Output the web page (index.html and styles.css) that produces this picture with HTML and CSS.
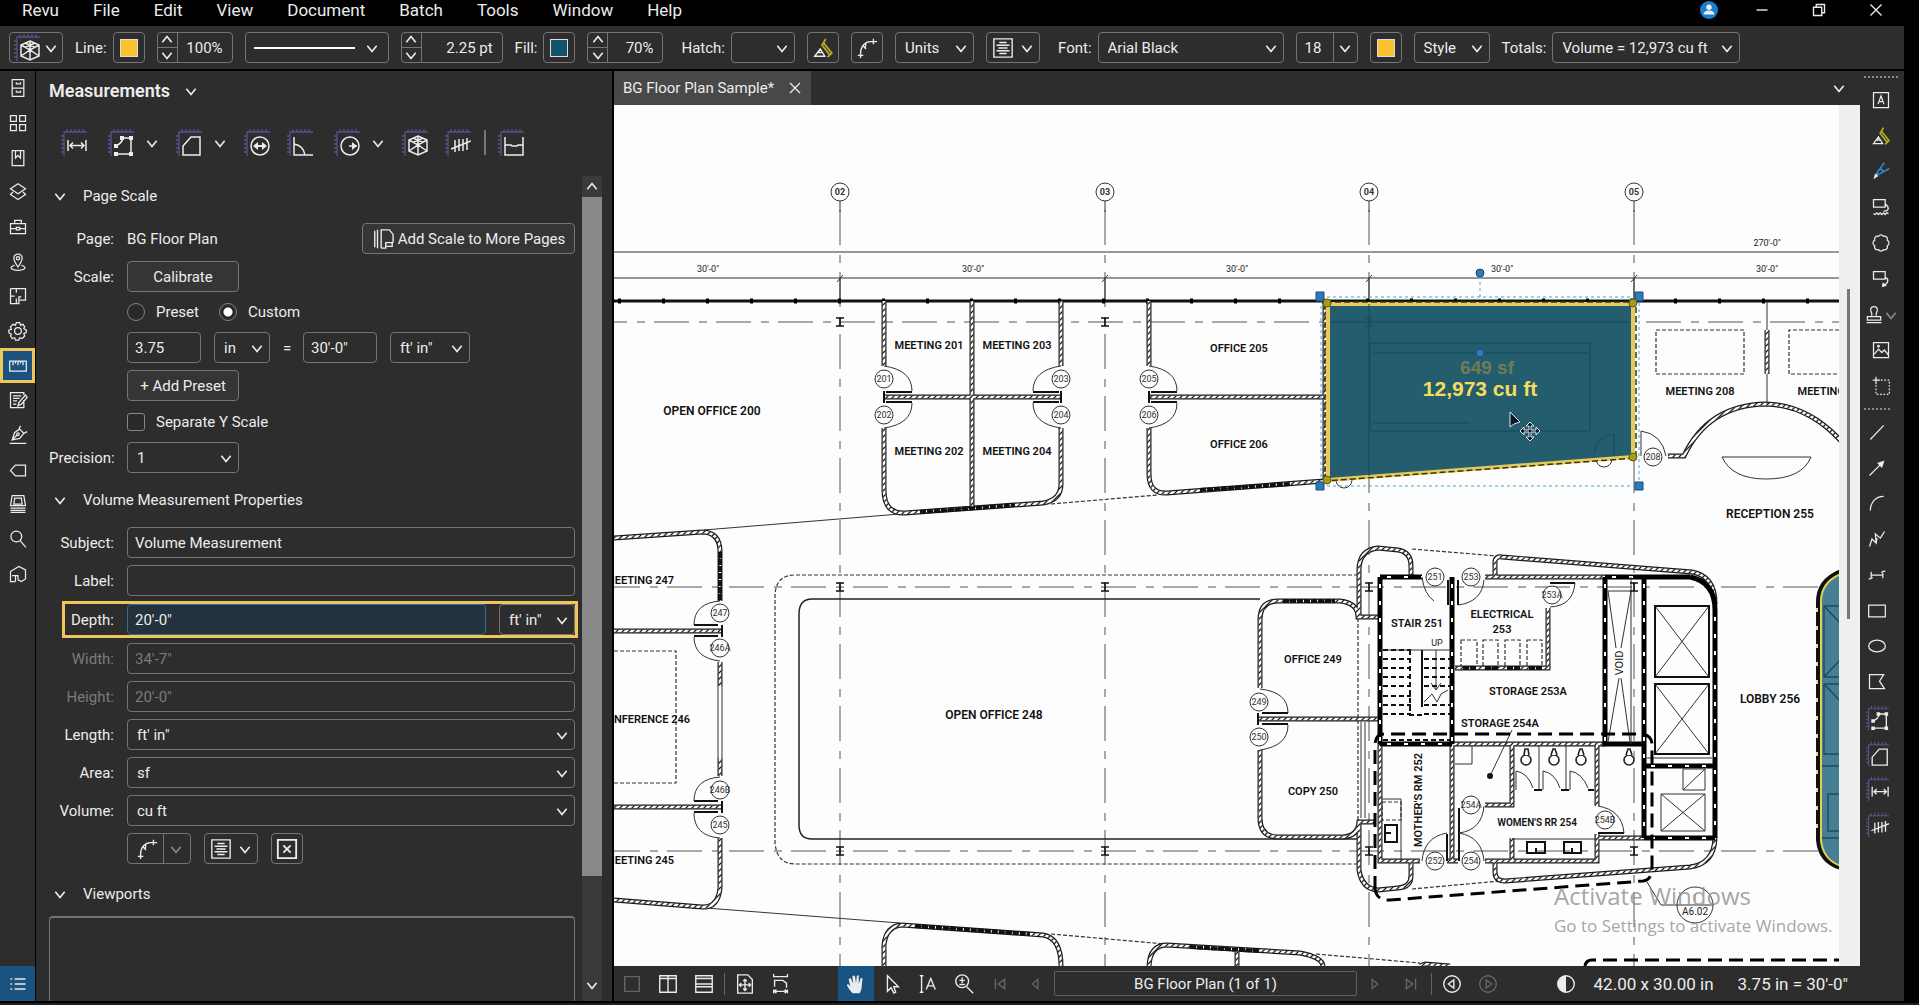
FILE: index.html
```html
<!DOCTYPE html>
<html lang="en">
<head>
<meta charset="utf-8">
<title>BG Floor Plan Sample - Revu</title>
<link rel="stylesheet" href="styles.css">
</head>
<body>
<svg class="sprite" aria-hidden="true">
  <symbol id="ruler" viewBox="0 0 26 27"><path class="ruler" d="M3 27V3H26M6 3V0M10 3V0M14 3V0M18 3V0M22 3V0M3 7H0M3 11H0M3 15H0M3 19H0M3 23H0"/></symbol>
  <symbol id="m-length" viewBox="0 0 26 27"><use href="#ruler"/><path d="M7 11v11M25 11v11M9 16.500h14M12 13.500l-3 3 3 3M20 13.500l3 3-3 3"/></symbol>
  <symbol id="m-poly" viewBox="0 0 26 27"><use href="#ruler"/><path d="M8 17c2-1 6-3 7-8h8v16H8"/><path class="solid" d="M6 15h4v4H6zM12 7h4v4h-4zM21 7h4v4h-4zM21 23h4v4h-4zM6 23h4v4H6z"/></symbol>
  <symbol id="m-area" viewBox="0 0 26 27"><use href="#ruler"/><path d="M7 17l8-9h9v18H7z"/></symbol>
  <symbol id="m-diam" viewBox="0 0 26 27"><use href="#ruler"/><circle cx="16" cy="17" r="9"/><path class="solid" d="M9 17l5-4v3h4v-3l5 4-5 4v-3h-4v3z"/></symbol>
  <symbol id="m-angle" viewBox="0 0 26 27"><use href="#ruler"/><path d="M7 8v18h19M7 15c6 1 10 5 11 11"/></symbol>
  <symbol id="m-radius" viewBox="0 0 26 27"><use href="#ruler"/><circle cx="16" cy="17" r="9"/><path d="M15 17h8"/><path class="solid" d="M18 13l5 4-5 4z"/></symbol>
  <symbol id="m-volume" viewBox="0 0 26 27"><use href="#ruler"/><path d="M16 7l9 4v11l-9 4-9-4V11zM7 11l9 5 9-5M16 7v19M7 22l9-6 9 6M11 9l10 4.500M21 9l-10 4.500"/></symbol>
  <symbol id="m-count" viewBox="0 0 26 27"><use href="#ruler"/><path d="M10 11v12M14 10v12M18 10v12M22 9v12M6 20l20-8"/></symbol>
  <symbol id="m-cut" viewBox="0 0 26 27"><use href="#ruler"/><path d="M7 8v18h18V8M7 16h6l1 1h5l1-1h5"/></symbol>

  <symbol id="i-file" viewBox="0 0 24 24"><path d="M5 2h14v20H5zM5 12h14M10 5v2h5V5M10 15v2h5v-2"/></symbol>
  <symbol id="i-grid" viewBox="0 0 24 24"><path d="M3 3h7v7H3zM14 3h7v7h-7zM3 14h7v7H3zM14 14h7v7h-7z"/></symbol>
  <symbol id="i-book" viewBox="0 0 24 24"><path d="M5 3h14v18H5zM9 3v9l3-3 3 3V3"/></symbol>
  <symbol id="i-layers" viewBox="0 0 24 24"><path d="M12 2l9 6-9 6-9-6zM6 12l-3 3 9 6 9-6-3-3"/></symbol>
  <symbol id="i-case" viewBox="0 0 24 24"><path d="M3 8h18v12H3zM8 8V4h8v4M3 14h7M14 14h7M10 12.500h4v3h-4z"/></symbol>
  <symbol id="i-pin" viewBox="0 0 24 24"><path d="M12 18C8 12 7 10 7 7.500a5 5 0 0 1 10 0C17 10 16 12 12 18z"/><circle cx="12" cy="7.500" r="2"/><path d="M8 16c-8 2-4 6 4 6s12-4 4-6"/></symbol>
  <symbol id="i-plan" viewBox="0 0 24 24"><path d="M3 3h7v5M3 3v18h7v-6M14 3h7v14h-8v-4h3M10 3h4M3 12h5M10 21h3v-4"/></symbol>
  <symbol id="i-gear" viewBox="0 0 24 24"><circle cx="12" cy="12" r="4"/><path d="M10 2h4l1 3 3-1 2 3-1 2 3 2v3l-3 1 1 3-3 3-3-1-1 3h-4l-1-3-3 1-2-3 1-2-3-2v-3l3-1-1-3 3-3 3 1z"/></symbol>
  <symbol id="i-meas" viewBox="0 0 24 24"><path d="M2 6h20v12H2zM6 6v5M9 6v3M12 6v5M15 6v3M18 6v5"/></symbol>
  <symbol id="i-form" viewBox="0 0 24 24"><path d="M19 12v9H3V3h16v3M6 7h10M6 10h8M6 13h5M6 17h4M21 6l-8 9-1 4 4-2 7-8z"/></symbol>
  <symbol id="i-sign" viewBox="0 0 24 24"><path d="M2 22h20M5 18l3-9 6-4 5 5-5 6zM5 18l6-6M13 5l2-4M19 10l4-2M14 5l5 5"/><circle cx="12" cy="11" r="1.500"/></symbol>
  <symbol id="i-tag" viewBox="0 0 24 24"><path d="M9 6h12v13H9l-6-6.500z"/></symbol>
  <symbol id="i-stack" viewBox="0 0 24 24"><path d="M5 2h14l2 12H3zM8 5h8l1 7H7zM3 17h18M3 19.500h18M3 22h18"/></symbol>
  <symbol id="i-search" viewBox="0 0 24 24"><circle cx="10" cy="9" r="6.500"/><path d="M14.500 14l7 8"/></symbol>
  <symbol id="i-studio" viewBox="0 0 24 24"><path d="M9 21H3V9l10-6 8 4v11l-5 3-4-2M9 21v-7H5M9 14h3v5"/></symbol>
  <symbol id="i-list" viewBox="0 0 24 24"><path class="heavy" d="M8 6h13M8 12h13M8 18h13M3 6h2M3 12h2M3 18h2"/></symbol>

  <symbol id="i-align" viewBox="0 0 24 24"><path d="M2 2h20v20H2zM8 6h8M5 9h14M7 12h10M5 15h14M8 18h8"/></symbol>
  <symbol id="i-leader" viewBox="0 0 24 24"><path d="M5 23v-5M2 20h6M5 18c0-8 5-13 11-13M16 5h7M19 2v6M7 9l4 4M11 6l-1 6"/></symbol>
  <symbol id="i-high" viewBox="0 0 24 24"><path class="lime" d="M15 2l-4 7 8 10M13 7l9 11M22 17l-5 5"/><path d="M3 21l6-8 5 8zM9 13l-2 4h5"/></symbol>
  <symbol id="i-pen" viewBox="0 0 24 24"><path class="azure" d="M16 2l-8 11-2 4 5-2 11-6M11 9l5 4"/><path class="solid" d="M3 22l2-7 4 3z"/></symbol>
  <symbol id="i-pages" viewBox="0 0 24 24"><path d="M3 3v18M6 2v20M10 22V2h9l4 5v9M10 22h5v-6h7v4h-6"/></symbol>
  <symbol id="i-text" viewBox="0 0 24 24"><path d="M3 3h18v18H3zM8.500 17L12 7l3.500 10M9.500 14h5"/></symbol>
  <symbol id="i-type" viewBox="0 0 24 24"><path d="M3 3h14v9H3zM17 8c5 4 5 8 0 9h-2M3 20l2 1 2-2 2 2 2-2 2 2 2-2 2 2 2-2 2 1"/></symbol>
  <symbol id="i-cloud" viewBox="0 0 24 24"><path d="M9 4a3.500 3.500 0 0 1 6 0a3.500 3.500 0 0 1 4.500 4.500a4 4 0 0 1 0 7a3.500 3.500 0 0 1-4.500 4.500a3.500 3.500 0 0 1-6 0a3.500 3.500 0 0 1-4.500-4.500a4 4 0 0 1 0-7A3.500 3.500 0 0 1 9 4z"/></symbol>
  <symbol id="i-call" viewBox="0 0 24 24"><path d="M3 3h14v9H3zM17 10c5 2 4 7-2 10"/><path class="solid" d="M13 22l1-6 5 4z"/></symbol>
  <symbol id="i-stamp" viewBox="0 0 24 24"><path d="M3 21h18M4 14h16v4H4zM9 14c2-4-1-5-1-8a4 4 0 0 1 8 0c0 3-3 4-1 8"/></symbol>
  <symbol id="i-image" viewBox="0 0 24 24"><path d="M3 3h18v18H3zM4 17l5-6 4 4 3-3 5 6"/><circle cx="9" cy="7.500" r="1"/></symbol>
  <symbol id="i-snap" viewBox="0 0 24 24"><path d="M6 1v9M2 5h9"/><path class="dots" d="M12 5h10v17H6V11"/></symbol>
  <symbol id="i-line" viewBox="0 0 24 24"><path d="M4 21L20 4"/></symbol>
  <symbol id="i-arrow" viewBox="0 0 24 24"><path d="M3 21L17 7"/><path class="solid" d="M21 3l-3 9-6-6z"/></symbol>
  <symbol id="i-arc" viewBox="0 0 24 24"><path d="M4 21C4 12 10 4 20 4"/></symbol>
  <symbol id="i-zig" viewBox="0 0 24 24"><path d="M3 21l3-9 5 5-1-11 6 5 5-8M11 17l1-6"/></symbol>
  <symbol id="i-dim" viewBox="0 0 24 24"><path d="M5 12h14M5 8v9M19 7v9M2 17l5-2M17 9l5-2"/></symbol>
  <symbol id="i-rect" viewBox="0 0 24 24"><path d="M2 5h20v14H2z"/></symbol>
  <symbol id="i-oval" viewBox="0 0 24 24"><ellipse cx="12" cy="12" rx="10" ry="7"/></symbol>
  <symbol id="i-shape" viewBox="0 0 24 24"><path d="M3 3h17l-5 8 6 9H3z"/></symbol>

  <symbol id="i-sq" viewBox="0 0 24 24"><path d="M4 4h16v16H4z"/></symbol>
  <symbol id="i-cols" viewBox="0 0 24 24"><path d="M3 3h18v18H3zM12 3v18M3 6h18"/></symbol>
  <symbol id="i-rows" viewBox="0 0 24 24"><path d="M3 3h18v18H3zM3 6h18M3 12h18M3 15h18"/></symbol>
  <symbol id="i-fit" viewBox="0 0 24 24"><path d="M4 2h11l5 5v15H4zM12 7v12M6 13h12M10 9l2-2 2 2M10 17l2 2 2-2M8 11l-2 2 2 2M16 11l2 2-2 2"/></symbol>
  <symbol id="i-width" viewBox="0 0 24 24"><path d="M4 1v3h15V1M5 15V8h9l4 3v5M4 18v4M19 18v4M4 20h15M7 18l-2 2 2 2M16 18l2 2-2 2"/></symbol>
  <symbol id="i-hand" viewBox="0 0 24 24"><path class="solid" d="M8 22c-2-3-5-6-6-9 1-2 3 0 4 2L4 7c1-2 2-1 3 0l2 5-1-8c1-2 2-1 3 0l1 7 1-8c1-1 2-1 2 1v8l2-6c2-1 2 0 2 1-1 6 0 10-3 15z"/></symbol>
  <symbol id="i-point" viewBox="0 0 24 24"><path d="M7 3v17l4-4 3 6 2-1-2-6h5z"/></symbol>
  <symbol id="i-seltext" viewBox="0 0 24 24"><path d="M3 3h4M5 3v18M3 21h4M10 18l5-12 5 12M12 14h6"/></symbol>
  <symbol id="i-zoom" viewBox="0 0 24 24"><circle cx="10" cy="9" r="7"/><path d="M15 15l7 7M10 5v6M7 8h6M7 12.500h6"/></symbol>
  <symbol id="i-first" viewBox="0 0 24 24"><path d="M7 6v12M17 7v10l-7-5z"/></symbol>
  <symbol id="i-prev" viewBox="0 0 24 24"><path d="M14 7v10l-6-5z"/></symbol>
  <symbol id="i-next" viewBox="0 0 24 24"><path d="M9 7v10l6-5z"/></symbol>
  <symbol id="i-last" viewBox="0 0 24 24"><path d="M17 6v12M7 7v10l7-5z"/></symbol>
  <symbol id="i-back" viewBox="0 0 24 24"><circle cx="12" cy="12" r="9"/><path d="M14 7.500v9L8 12z"/></symbol>
  <symbol id="i-fwd" viewBox="0 0 24 24"><circle cx="12" cy="12" r="9"/><path d="M10 7.500v9l6-4.500z"/></symbol>
  <symbol id="i-half" viewBox="0 0 24 24"><circle cx="12" cy="12" r="9"/><path class="solid" d="M12 3a9 9 0 0 0 0 18z"/></symbol>
  <symbol id="i-x" viewBox="0 0 24 24"><path d="M6 6l12 12M18 6L6 18"/></symbol>
  <symbol id="i-min" viewBox="0 0 24 24"><path d="M6 12h12"/></symbol>
  <symbol id="i-restore" viewBox="0 0 24 24"><path d="M6 9h9v9H6zM9 9V6h9v9h-3"/></symbol>
  <symbol id="i-boxx" viewBox="0 0 24 24"><path class="heavy" d="M2 2h20v20H2zM8 8l8 8M16 8l-8 8"/></symbol>
  <symbol id="i-down" viewBox="0 0 12 12"><path d="M2 4l4 5 4-5"/></symbol>
  <symbol id="i-up" viewBox="0 0 12 12"><path d="M2 8l4-5 4 5"/></symbol>
</svg>

<div class="app">
  <header class="menubar">
    <nav class="menus">
      <a href="#">Revu</a><a href="#">File</a><a href="#">Edit</a><a href="#">View</a><a href="#">Document</a><a href="#">Batch</a><a href="#">Tools</a><a href="#">Window</a><a href="#">Help</a>
    </nav>
    <div class="window-controls">
      <button class="account" aria-label="Account"><svg viewBox="0 0 20 20"><circle cx="10" cy="10" r="10" class="disc"/><circle cx="10" cy="7" r="3" class="solid"/><path class="solid" d="M4 15c0-6 12-6 12 0z"/></svg></button>
      <button aria-label="Minimize"><svg class="icon"><use href="#i-min"/></svg></button>
      <button aria-label="Restore"><svg class="icon"><use href="#i-restore"/></svg></button>
      <button aria-label="Close"><svg class="icon"><use href="#i-x"/></svg></button>
    </div>
  </header>

  <div class="toolbar">
    <button class="ctl tool-pick" aria-label="Volume tool"><svg class="micon"><use href="#m-volume"/></svg><svg class="chev"><use href="#i-down"/></svg></button>
    <div class="field"><span>Line:</span><button class="ctl swatch" aria-label="Line color"><i class="chip gold"></i></button></div>
    <div class="ctl spin w-pct"><div class="steps"><button aria-label="Increase opacity"><svg class="chev"><use href="#i-up"/></svg></button><button aria-label="Decrease opacity"><svg class="chev"><use href="#i-down"/></svg></button></div><input aria-label="Line opacity" value="100%"></div>
    <button class="ctl line-style" aria-label="Line style"><i class="stroke"></i><svg class="chev"><use href="#i-down"/></svg></button>
    <div class="ctl spin w-pt"><div class="steps"><button aria-label="Increase width"><svg class="chev"><use href="#i-up"/></svg></button><button aria-label="Decrease width"><svg class="chev"><use href="#i-down"/></svg></button></div><input aria-label="Line width" value="2.25 pt"></div>
    <div class="field"><span>Fill:</span><button class="ctl swatch" aria-label="Fill color"><i class="chip teal"></i></button></div>
    <div class="ctl spin w-pct"><div class="steps"><button aria-label="Increase fill opacity"><svg class="chev"><use href="#i-up"/></svg></button><button aria-label="Decrease fill opacity"><svg class="chev"><use href="#i-down"/></svg></button></div><input aria-label="Fill opacity" value="70%"></div>
    <label class="field spaced"><span>Hatch:</span><select class="ctl w-hatch"><option></option></select></label>
    <button class="ctl swatch" aria-label="Highlight"><svg class="icon"><use href="#i-high"/></svg></button>
    <button class="ctl swatch" aria-label="Leader"><svg class="icon"><use href="#i-leader"/></svg></button>
    <select class="ctl w-units" aria-label="Units"><option>Units</option></select>
    <button class="ctl align" aria-label="Alignment"><svg class="icon"><use href="#i-align"/></svg><svg class="chev"><use href="#i-down"/></svg></button>
    <label class="field spaced"><span>Font:</span><select class="ctl w-font"><option>Arial Black</option></select></label>
    <select class="ctl w-size" aria-label="Font size"><option>18</option></select>
    <button class="ctl swatch" aria-label="Text color"><i class="chip gold"></i></button>
    <select class="ctl w-style" aria-label="Style"><option>Style</option></select>
    <label class="field"><span>Totals:</span><select class="ctl w-total"><option>Volume = 12,973 cu ft</option></select></label>
  </div>

  <div class="body">
    <aside class="rail">
      <div class="rail-tabs">
        <button aria-label="File Access"><svg class="icon"><use href="#i-file"/></svg></button>
        <button aria-label="Thumbnails"><svg class="icon"><use href="#i-grid"/></svg></button>
        <button aria-label="Bookmarks"><svg class="icon"><use href="#i-book"/></svg></button>
        <button aria-label="Layers"><svg class="icon"><use href="#i-layers"/></svg></button>
        <button aria-label="Tool Chest"><svg class="icon"><use href="#i-case"/></svg></button>
        <button aria-label="Places"><svg class="icon"><use href="#i-pin"/></svg></button>
        <button aria-label="Spaces"><svg class="icon"><use href="#i-plan"/></svg></button>
        <button aria-label="Properties"><svg class="icon"><use href="#i-gear"/></svg></button>
        <button class="active" aria-label="Measurements"><svg class="icon"><use href="#i-meas"/></svg></button>
        <button aria-label="Forms"><svg class="icon"><use href="#i-form"/></svg></button>
        <button aria-label="Signatures"><svg class="icon"><use href="#i-sign"/></svg></button>
        <button aria-label="Flags"><svg class="icon"><use href="#i-tag"/></svg></button>
        <button aria-label="Sets"><svg class="icon"><use href="#i-stack"/></svg></button>
        <button aria-label="Search"><svg class="icon"><use href="#i-search"/></svg></button>
        <button aria-label="Studio"><svg class="icon"><use href="#i-studio"/></svg></button>
      </div>
      <button class="markups" aria-label="Markups list"><svg class="icon"><use href="#i-list"/></svg></button>
    </aside>

    <section class="panel">
      <h1 class="panel-title">Measurements <svg class="chev"><use href="#i-down"/></svg></h1>
      <div class="measure-tools">
        <button class="wide" aria-label="Length"><svg class="micon"><use href="#m-length"/></svg></button>
        <button aria-label="Polylength"><svg class="micon"><use href="#m-poly"/></svg><svg class="chev"><use href="#i-down"/></svg></button>
        <button aria-label="Area"><svg class="micon"><use href="#m-area"/></svg><svg class="chev"><use href="#i-down"/></svg></button>
        <button aria-label="Diameter"><svg class="micon"><use href="#m-diam"/></svg></button>
        <button class="wide" aria-label="Angle"><svg class="micon"><use href="#m-angle"/></svg></button>
        <button aria-label="Radius"><svg class="micon"><use href="#m-radius"/></svg><svg class="chev"><use href="#i-down"/></svg></button>
        <button aria-label="Volume"><svg class="micon"><use href="#m-volume"/></svg></button>
        <button aria-label="Count"><svg class="micon"><use href="#m-count"/></svg></button>
        <div class="cutgroup"><i class="bar"></i><button aria-label="Cutout"><svg class="micon"><use href="#m-cut"/></svg></button></div>
      </div>

      <div class="panel-scroll">
        <div class="panel-content">
          <h2><svg class="chev"><use href="#i-down"/></svg>Page Scale</h2>
          <div class="form">
            <span class="lbl">Page:</span>
            <div class="row between"><span>BG Floor Plan</span><button class="ctl add-scale"><svg class="icon"><use href="#i-pages"/></svg>Add Scale to More Pages</button></div>
            <span class="lbl">Scale:</span>
            <div class="row"><button class="ctl btn">Calibrate</button></div>
            <div class="row radios"><label><input type="radio" name="scale">Preset</label><label><input type="radio" name="scale" checked>Custom</label></div>
            <div class="row values"><input class="ctl w-num" aria-label="Page distance" value="3.75"><select class="ctl w-in" aria-label="Page unit"><option>in</option></select><span class="eq">=</span><input class="ctl w-num" aria-label="Real distance" value="30'-0&quot;"><select class="ctl w-ft" aria-label="Real unit"><option>ft' in"</option></select></div>
            <div class="row"><button class="ctl btn">+ Add Preset</button></div>
            <div class="row"><label class="check"><input type="checkbox">Separate Y Scale</label></div>
            <label class="lbl" for="precision">Precision:</label>
            <div class="row"><select class="ctl w-prec" id="precision"><option>1</option></select></div>
          </div>

          <h2 class="h-volume"><svg class="chev"><use href="#i-down"/></svg>Volume Measurement Properties</h2>
          <div class="props">
            <div class="prop"><label for="subject">Subject:</label><input class="ctl" id="subject" value="Volume Measurement"></div>
            <div class="prop"><label for="label">Label:</label><input class="ctl" id="label"></div>
            <div class="prop marked"><label for="depth">Depth:</label><input class="ctl focus" id="depth" value="20'-0&quot;"><select class="ctl w-depth" aria-label="Depth unit"><option>ft' in"</option></select></div>
            <div class="prop off"><label for="width">Width:</label><input class="ctl" id="width" value="34'-7&quot;" disabled></div>
            <div class="prop off"><label for="height">Height:</label><input class="ctl" id="height" value="20'-0&quot;" disabled></div>
            <div class="prop"><label for="length">Length:</label><select class="ctl" id="length"><option>ft' in"</option></select></div>
            <div class="prop"><label for="area">Area:</label><select class="ctl" id="area"><option>sf</option></select></div>
            <div class="prop"><label for="volume">Volume:</label><select class="ctl" id="volume"><option>cu ft</option></select></div>
            <div class="prop-buttons">
              <button class="ctl split" aria-label="Leader"><svg class="icon"><use href="#i-leader"/></svg><i class="divider"></i><svg class="chev dim"><use href="#i-down"/></svg></button>
              <button class="ctl align" aria-label="Alignment"><svg class="icon"><use href="#i-align"/></svg><svg class="chev"><use href="#i-down"/></svg></button>
              <button class="ctl swatch" aria-label="Clear"><svg class="icon"><use href="#i-boxx"/></svg></button>
            </div>
          </div>
          <h2 class="h-view"><svg class="chev"><use href="#i-down"/></svg>Viewports</h2>
          <div class="viewports"></div>
        </div>
        <div class="scrollbar"><button aria-label="Scroll up"><svg class="chev"><use href="#i-up"/></svg></button><div class="track"><i class="thumb"></i></div><button class="last" aria-label="Scroll down"><svg class="chev"><use href="#i-down"/></svg></button></div>
      </div>
    </section>

    <main class="doc">
      <div class="tabs"><div class="tab"><span>BG Floor Plan Sample*</span><button aria-label="Close tab"><svg class="icon"><use href="#i-x"/></svg></button></div><button class="tab-list" aria-label="Tab list"><svg class="chev"><use href="#i-down"/></svg></button></div>
      <div class="canvas">
        <svg class="plan" viewBox="614 105 1225 861" preserveAspectRatio="xMinYMin slice">
          <defs>
            <pattern id="hatch" width="6" height="6" patternUnits="userSpaceOnUse"><path class="hatch-line" d="M-1 7L7 -1M-1 1L1 -1M5 7L7 5"/></pattern>
            <path id="walls" d="M884 301V366M884 428V490Q884 514 905 513L1043 503Q1061 500 1061 484V428M1061 301V366M972 301V510M884 397H1061
              M1149 301V366M1149 428V474Q1149 494 1167 493L1324 481M1149 397H1323
              M614 538L702 532Q720 532 720 552V601M614 631H722M720 662V686M720 758V776M614 807H722M720 838V888Q718 908 702 907L614 900
              M884 966V945Q886 926 902 925L1043 935Q1061 938 1061 966M1149 966Q1150 945 1167 945L1300 953Q1322 957 1323 966M1237 950V966M1420 966L1425 964 1450 966
              M1260 688V620Q1260 601 1278 601H1340Q1358 603 1358 617H1378M1260 750V818Q1260 837 1278 837H1343Q1358 836 1359 822H1376M1258 719H1380
              M1359 616V570Q1359 550 1378 548L1398 550Q1411 552 1411 566V577M1495 577V562Q1495 556 1502 557L1692 572Q1715 576 1715 604
              M1359 822V870Q1362 889 1378 890L1398 888Q1411 887 1411 876V861M1715 838Q1714 864 1690 867L1505 881Q1495 881 1495 872V861
              M1485 577H1605M1548 608V668H1455M1452 744H1605M1380 744V861H1420M1452 744V861M1485 861H1597V834M1512 744V805H1485M1597 744V806M1597 838H1644M1512 838V861M1447 861H1458
              M1668 456H1684Q1708 405 1766 404Q1808 405 1841 441M1767 330V374M1325 303V480"/>
          </defs>
          <rect x="614" y="105" width="1225" height="861" class="paper"/>
          <g class="thin">
            <path class="axis" d="M840 201V966M1105 201V966M1369 201V966M1634 201V966" stroke-dashoffset="-9"/>
            <path d="M840 201V212M1105 201V212M1369 201V212M1634 201V212M840 278V301M1105 278V301M1369 278V301M1634 278V301"/>
            <path class="axis" d="M592 322H1839M605 587H1839M605 851H1839"/>
            <path d="M614 252H1839M614 278H1839M704 530L900 514M706 908L900 923M837 282l6-7M1102 282l6-7M1366 282l6-7M1631 282l6-7"/>
            <circle cx="840" cy="192" r="9"/><circle cx="1105" cy="192" r="9"/><circle cx="1369" cy="192" r="9"/><circle cx="1634" cy="192" r="9"/>
          </g>
          <path class="line" d="M1260 599H812Q799 599 799 614V825Q799 839 812 839H1358"/>
          <path class="dash" d="M1358 575H795Q775 575 775 597V843Q777 864 795 864H1358M1358 618V822M614 651H676V783H614M1051 504L1158 495M1051 934L1165 944M1316 954L1420 963M1412 549L1497 556M1412 889L1500 881M1656 330H1744V374H1656ZM1839 330H1789V374H1839M1461 640H1477V668H1461ZM1483 640H1498V668H1483ZM1505 640H1520V668H1505ZM1527 640H1542V668H1527ZM1382 802H1401V820H1382Z"/>
          <path class="facade" d="M614 301H1839"/><path class="mullion" d="M618 301H1839"/>
          <use href="#walls" class="w-out"/><use href="#walls" class="w-in-line"/><use href="#walls" fill="none" stroke="url(#hatch)" stroke-width="3"/>
          <path class="braced" d="M920 512L1015 505M1200 490L1290 484M915 926L1030 934M1190 947L1260 951M720 552V600M1283 601H1335M1463 668H1477M1485 668H1499M1507 668H1521M1529 668H1542"/>
          <path class="core" d="M1380 577H1422M1380 577V744M1452 577V744M1380 744H1452M1605 577H1690M1605 577V744H1644M1644 577V838M1690 577Q1715 582 1715 610V838M1644 766H1715M1644 838H1715"/>
          <path class="core-gap" d="M1380 577H1422M1380 577V744M1452 577V744M1380 744H1452M1605 577H1644M1605 577V744M1644 577V838M1715 610V838M1644 766H1715M1644 838H1715"/>
          <g class="thin">
            <path class="leaf" d="M884 391V403M886 392H912M886 402H912M1061 391V403M1059 392H1033M1059 402H1033M1149 391V403M1151 392H1177M1151 402H1177M722 625V637M718 625H694M718 636H694M722 801V813M718 801H694M718 812H694M1258 713V725M1262 713H1288M1262 724H1288M1448 580V605M1458 580V605M1459 808V861M1447 834V861M1598 833H1624M1550 583H1575"/>
            <path d="M884 366Q912 370 912 391M884 428Q912 424 912 403M1061 366Q1033 370 1033 391M1061 428Q1033 424 1033 403M1149 366Q1177 370 1177 391M1149 428Q1177 424 1177 403M720 601Q694 603 694 625M720 661Q694 658 694 637M720 777Q694 779 694 801M720 838Q694 836 694 813M1260 689Q1288 692 1288 713M1260 750Q1288 746 1288 725
              M1422 577Q1424 594 1434 601M1458 605Q1482 602 1484 580M1575 583Q1573 606 1550 607M1459 833Q1482 830 1484 806M1422 861Q1424 837 1447 833M1459 833Q1482 837 1484 861M1598 806Q1622 810 1624 833M1641 431Q1662 434 1666 456M1641 431V456
              M718 686V758M722 686V758M767 301M1767 301V330M1767 374V404M1722 457H1811Q1802 479 1766 479Q1732 479 1722 457Z
              M1361 722V818M1365 722V818M1512 839H1597M1401 861V799H1382M1380 650H1452M1631 577V744M1608 591H1631M1608 591L1616 648M1631 591L1621 648M1619 678L1608 742M1621 678L1630 742M1436 650V690M1431 683L1436 690 1441 683M1424 702L1432 694 1437 702 1441 694 1448 690
              M1655 677L1709 606V677L1655 606M1655 754L1709 684V754L1655 684M1683 790L1705 769V790H1683V769H1705M1661 831L1705 794M1661 794L1705 831M1661 794H1705V831H1661ZM1647 758H1712M1539 746V790M1566 746V790M1516 790V771Q1528 773 1533 788M1543 790V771Q1555 773 1560 788M1570 790V771Q1582 773 1588 788M1455 764H1472V746
              M1512 730L1490 776M1647 882L1661 905H1713"/>
            <circle cx="1695" cy="905" r="18"/>
            <path class="leaf" d="M1655 606H1709V677H1655ZM1655 684H1709V754H1655ZM1527 842H1545V853H1527ZM1564 842H1581V853H1564ZM1385 825H1397V842H1385ZM1536 848V853M1572 848V853M1385 833H1391M1422 650V707M1534 790H1542M1561 790H1569M1588 790H1594"/>
            <path class="tread" d="M1383 650H1411M1383 659H1411M1383 668H1411M1383 677H1411M1383 686H1411M1383 696H1411M1383 705H1411M1383 714H1411M1424 659H1450M1424 668H1450M1424 677H1450M1424 686H1450M1410 650V715H1424M1383 740H1450M1424 705H1450M1424 714H1450"/>
          </g>
          <g class="wc"><circle cx="1526" cy="760" r="5"/><circle cx="1554" cy="760" r="5"/><circle cx="1581" cy="760" r="5"/><circle cx="1629" cy="760" r="5"/><path d="M1524 755L1525 749H1528L1529 755M1551 755L1553 749H1555L1557 755M1578 755L1580 749H1582L1584 755M1626 755L1628 749H1630L1632 755"/></g>
          <circle cx="1490" cy="776" r="3"/>
          <path class="boundary" d="M1375 890V745Q1375 734 1385 734H1642Q1652 735 1652 745V868Q1652 880 1643 881L1390 900Q1376 901 1375 888M1585 966Q1586 960 1592 960H1839"/>
          <path class="beams" d="M836 318h8M840 318v8M836 326h8M1101 318h8M1105 318v8M1101 326h8M836 583h8M840 583v8M836 591h8M1101 583h8M1105 583v8M1101 591h8M836 847h8M840 847v8M836 855h8M1101 847h8M1105 847v8M1101 855h8M1365 583h8M1369 583v8M1365 591h8M1630 583h8M1634 583v8M1630 591h8M1365 847h8M1369 847v8M1365 855h8M1630 847h8M1634 847v8M1630 855h8"/>
          <g class="bubbles">
            <circle cx="884" cy="379" r="9"/><circle cx="884" cy="415" r="9"/><circle cx="1061" cy="379" r="9"/><circle cx="1061" cy="415" r="9"/><circle cx="1149" cy="379" r="9"/><circle cx="1149" cy="415" r="9"/><circle cx="720" cy="613" r="9"/><circle cx="720" cy="648" r="9"/><circle cx="720" cy="790" r="9"/><circle cx="720" cy="825" r="9"/><circle cx="1259" cy="702" r="9"/><circle cx="1259" cy="737" r="9"/><circle cx="1435" cy="577" r="9"/><circle cx="1471" cy="577" r="9"/><circle cx="1552" cy="595" r="9"/><circle cx="1471" cy="805" r="9"/><circle cx="1605" cy="820" r="9"/><circle cx="1435" cy="861" r="9"/><circle cx="1471" cy="861" r="9"/><circle cx="1653" cy="457" r="9"/><circle cx="1344" cy="480" r="8"/><circle cx="1604" cy="459" r="8"/>
          </g>
          <g class="tag">
            <text x="884" y="382">201</text><text x="884" y="418">202</text><text x="1061" y="382">203</text><text x="1061" y="418">204</text><text x="1149" y="382">205</text><text x="1149" y="418">206</text><text x="720" y="616">247</text><text x="720" y="651">246A</text><text x="720" y="793">246B</text><text x="720" y="828">245</text><text x="1259" y="705">249</text><text x="1259" y="740">250</text><text x="1435" y="580">251</text><text x="1471" y="580">253</text><text x="1552" y="598">253A</text><text x="1471" y="808">254A</text><text x="1605" y="823">254B</text><text x="1435" y="864">252</text><text x="1471" y="864">254</text><text x="1653" y="460">208</text>
          </g>
          <g class="tag strong"><text x="840" y="195">02</text><text x="1105" y="195">03</text><text x="1369" y="195">04</text><text x="1634" y="195">05</text></g>
          <g class="dimension"><text x="708" y="272">30'-0"</text><text x="973" y="272">30'-0"</text><text x="1237" y="272">30'-0"</text><text x="1502" y="272">30'-0"</text><text x="1767" y="272">30'-0"</text><text x="1767" y="246">270'-0"</text><text x="1437" y="646">UP</text><text class="ref" x="1695" y="915">A6.02</text><text class="faded" x="1695" y="901">1</text></g>
          <g class="room">
            <text class="lg" x="712" y="415">OPEN OFFICE 200</text><text x="929" y="349">MEETING 201</text><text x="1017" y="349">MEETING 203</text><text x="929" y="455">MEETING 202</text><text x="1017" y="455">MEETING 204</text>
            <text x="1239" y="352">OFFICE 205</text><text x="1239" y="448">OFFICE 206</text><text class="lg" x="994" y="719">OPEN OFFICE 248</text><text x="1700" y="395">MEETING 208</text><text x="1832" y="395">MEETING 209</text><text class="lg" x="1770" y="518">RECEPTION 255</text><text class="lg" x="1770" y="703">LOBBY 256</text>
            <text x="1313" y="663">OFFICE 249</text><text x="1313" y="795">COPY 250</text><text x="1417" y="627">STAIR 251</text><text x="1502" y="618">ELECTRICAL</text><text x="1502" y="633">253</text><text x="1528" y="695">STORAGE 253A</text><text x="1500" y="727">STORAGE 254A</text><text class="sm" x="1537" y="826">WOMEN'S RR 254</text>
            <text transform="translate(1422 800) rotate(-90)">MOTHER'S RM 252</text><text class="light" transform="translate(1623 663) rotate(-90)">VOID</text>
            <g class="end"><text x="674" y="584">MEETING 247</text><text x="690" y="723">CONFERENCE 246</text><text x="674" y="864">MEETING 245</text></g>
          </g>
          <g class="lobby"><path class="lobby-fill" d="M1841 571Q1819 580 1819 602V840Q1821 862 1841 868Z"/><path class="lobby-wall" d="M1841 571Q1818 580 1818 602V840Q1820 862 1841 868"/><path class="lobby-ticks" d="M1817 608V835"/><path class="lobby-edge" d="M1841 574Q1821 582 1821 602V840Q1823 860 1841 866"/><path class="lobby-line" d="M1841 606H1824V677H1841M1841 684H1824V754H1841M1824 606L1841 624M1824 677L1841 659M1824 684L1841 702M1841 794H1828V831H1841M1822 766H1841M1822 838H1841"/></g>
          <g class="selection">
            <path class="vol" d="M1328 304H1633V457L1328 480Z"/><path class="vol-edge" d="M1328 304H1633V457L1328 480Z"/><path class="vol-dash" d="M1325 481V302H1636V458Z"/>
            <path class="ghost" d="M1370 343H1590V431H1370ZM1374 353H1590M1374 423H1470M1369 304V476M1330 322H1630M1594 452Q1598 436 1614 434V456M1365 318h8M1369 318v8M1365 326h8"/>
            <path class="bbox" d="M1321 297H1639V486H1321ZM1480 297V278"/>
            <path class="grip" d="M1316 292h8v9h-8zM1635 292h8v9h-8zM1316 482h8v8h-8zM1635 482h8v8h-8z"/>
            <circle class="grip" cx="1480" cy="273" r="4"/><circle class="grip" cx="1480" cy="353" r="4"/>
            <circle class="node" cx="1327" cy="303" r="4"/><circle class="node" cx="1633" cy="303" r="4"/><circle class="node" cx="1633" cy="457" r="4"/><circle class="node" cx="1327" cy="480" r="4"/>
            <text class="area-text" x="1487" y="374">649 sf</text><text class="vol-text" x="1480" y="396">12,973 cu ft</text>
          </g>
          <g class="cursor"><path d="M1510 412V427L1514 424 1520 422Z"/><path d="M1530 422l4 4h-3v4h5v-3l4 4-4 4v-3h-5v5h3l-4 4-4-4h3v-5h-5v3l-4-4 4-4v3h5v-4h-3z"/></g>
          <g class="watermark"><text class="wm-big" x="1554" y="905">Activate Windows</text><text class="wm-small" x="1554" y="932">Go to Settings to activate Windows.</text></g>
        </svg>
        <div class="vscroll"><i></i></div>
      </div>
      <footer class="status">
        <button class="faint" aria-label="Single view"><svg class="icon"><use href="#i-sq"/></svg></button><button aria-label="Split vertical"><svg class="icon"><use href="#i-cols"/></svg></button><button aria-label="Split horizontal"><svg class="icon"><use href="#i-rows"/></svg></button>
        <i class="sep"></i>
        <button aria-label="Fit page"><svg class="icon"><use href="#i-fit"/></svg></button><button aria-label="Fit width"><svg class="icon"><use href="#i-width"/></svg></button>
        <div class="nav-tools">
          <button class="active" aria-label="Pan"><svg class="icon"><use href="#i-hand"/></svg></button><button aria-label="Select"><svg class="icon"><use href="#i-point"/></svg></button><button aria-label="Select text"><svg class="icon"><use href="#i-seltext"/></svg></button><button aria-label="Zoom"><svg class="icon"><use href="#i-zoom"/></svg></button><button class="faint" aria-label="First page"><svg class="icon"><use href="#i-first"/></svg></button><button class="faint" aria-label="Previous page"><svg class="icon"><use href="#i-prev"/></svg></button>
          <input class="page-box" aria-label="Page" value="BG Floor Plan (1 of 1)">
          <button class="faint" aria-label="Next page"><svg class="icon"><use href="#i-next"/></svg></button><button class="faint" aria-label="Last page"><svg class="icon"><use href="#i-last"/></svg></button><i class="sep"></i><button aria-label="Back"><svg class="icon"><use href="#i-back"/></svg></button><button class="faint" aria-label="Forward"><svg class="icon"><use href="#i-fwd"/></svg></button>
        </div>
        <div class="readout"><svg class="icon"><use href="#i-half"/></svg><span>42.00 x 30.00 in</span><span>3.75 in = 30'-0"</span></div>
      </footer>
    </main>

    <aside class="tools">
      <i class="dots-row"></i>
      <div class="group one">
        <button aria-label="Text box"><svg class="icon"><use href="#i-text"/></svg></button><button aria-label="Highlight"><svg class="icon"><use href="#i-high"/></svg></button><button aria-label="Pen"><svg class="icon"><use href="#i-pen"/></svg></button><button aria-label="Typewriter"><svg class="icon"><use href="#i-type"/></svg></button><button aria-label="Cloud"><svg class="icon"><use href="#i-cloud"/></svg></button><button aria-label="Callout"><svg class="icon"><use href="#i-call"/></svg></button><button aria-label="Stamp"><svg class="icon"><use href="#i-stamp"/></svg><svg class="chev dim"><use href="#i-down"/></svg></button><button aria-label="Image"><svg class="icon"><use href="#i-image"/></svg></button><button aria-label="Snapshot"><svg class="icon"><use href="#i-snap"/></svg></button>
      </div>
      <i class="dots-row short"></i>
      <div class="group two">
        <button aria-label="Line"><svg class="icon"><use href="#i-line"/></svg></button><button aria-label="Arrow"><svg class="icon"><use href="#i-arrow"/></svg></button><button aria-label="Arc"><svg class="icon"><use href="#i-arc"/></svg></button><button aria-label="Polyline"><svg class="icon"><use href="#i-zig"/></svg></button><button aria-label="Dimension"><svg class="icon"><use href="#i-dim"/></svg></button><button aria-label="Rectangle"><svg class="icon"><use href="#i-rect"/></svg></button><button aria-label="Ellipse"><svg class="icon"><use href="#i-oval"/></svg></button><button aria-label="Polygon"><svg class="icon"><use href="#i-shape"/></svg></button><button aria-label="Polylength"><svg class="micon"><use href="#m-poly"/></svg></button><button aria-label="Area"><svg class="micon"><use href="#m-area"/></svg></button><button aria-label="Length"><svg class="micon"><use href="#m-length"/></svg></button><button aria-label="Count"><svg class="micon"><use href="#m-count"/></svg></button>
      </div>
    </aside>
  </div>
  <div class="bottom-edge"></div>
</div>
</body>
</html>
```
FILE: styles.css
```css
* { box-sizing: border-box; }
body { margin: 0; background: #000; color: #ececec; font: 15px/20px Roboto, "Liberation Sans", sans-serif; }
button, input, select { font: inherit; color: inherit; margin: 0; }
button { background: none; border: 0; padding: 0; display: flex; align-items: center; justify-content: center; }
a { color: inherit; text-decoration: none; }
svg { fill: none; stroke: currentColor; stroke-width: 1.5; flex: none; }
.sprite { position: absolute; width: 0; height: 0; }
.icon { width: 22px; height: 22px; }
.micon { width: 26px; height: 27px; }
.chev { width: 14px; height: 14px; stroke-width: 1.4; }
.dim { color: #888; }
.ruler { stroke: #59508f; stroke-width: 1.3; }
.solid { fill: currentColor; stroke: none; }
.heavy { stroke-width: 2; }
.lime { stroke: #b3ae22; stroke-width: 2; }
.azure { stroke: #3585cc; stroke-width: 2; }
.dots { stroke-dasharray: 2 2; }

.app { display: flex; flex-direction: column; height: 100vh; overflow: hidden; }
.menubar { display: flex; justify-content: space-between; height: 26px; padding: 0 15px 6px 22px; font-size: 17px; }
.menus { display: flex; gap: 34px; }
.window-controls { display: flex; height: 20px; }
.window-controls button { width: 57px; }
.window-controls .account { width: 49px; }
.account svg { width: 18px; height: 18px; }
.disc { fill: #1b7fd0; stroke: none; }

.toolbar { display: flex; align-items: center; gap: 12px; height: 43px; margin-right: 15px; padding-left: 9px; background: #2d2d2d; }
.field { display: flex; align-items: center; gap: 6px; }
.spaced { padding-left: 6px; }
.ctl { height: 31px; border: 1px solid #757575; border-radius: 4px; background-color: #2d2d2d; }
input.ctl { padding: 0 7px; min-width: 0; }
select.ctl { appearance: none; padding: 0 24px 0 9px; background-image: url("data:image/svg+xml,%3Csvg xmlns='http://www.w3.org/2000/svg' viewBox='0 0 12 12' fill='none' stroke='%23ececec' stroke-width='1.4'%3E%3Cpath d='M2 4l4 5 4-5'/%3E%3C/svg%3E"); background-repeat: no-repeat; background-position: right 5px center; background-size: 14px 14px; }
.tool-pick { width: 54px; gap: 4px; }
.swatch { width: 32px; }
.chip { width: 18px; height: 18px; border: 1px solid #ddd; }
.gold { background: #fcc12f; }
.teal { background: #125468; }
.spin { display: flex; overflow: hidden; }
.steps { display: flex; flex-direction: column; width: 20px; border-right: 1px solid #757575; }
.steps button { flex: 1; min-height: 0; }
.steps button + button { border-top: 1px solid #757575; }
.spin input { flex: 1; min-width: 0; border: 0; background: none; text-align: right; padding: 0 9px 0 0; }
.w-pct { width: 76px; }
.w-pt { width: 102px; }
.line-style { width: 144px; gap: 10px; }
.stroke { width: 101px; height: 2px; background: #fff; }
.w-hatch { width: 64px; }
.w-units { width: 79px; }
.align { width: 54px; gap: 6px; }
.w-font { width: 186px; }
select.w-size { width: 62px; background-image: linear-gradient(#757575, #757575), url("data:image/svg+xml,%3Csvg xmlns='http://www.w3.org/2000/svg' viewBox='0 0 12 12' fill='none' stroke='%23ececec' stroke-width='1.4'%3E%3Cpath d='M2 4l4 5 4-5'/%3E%3C/svg%3E"); background-position: right 23px center, right 5px center; background-size: 1px 100%, 14px 14px; padding: 0 0 0 8px; }
.w-style { width: 76px; }
.w-total { width: 188px; }

.body { display: flex; flex: 1; min-height: 0; margin-right: 15px; padding-top: 2px; }
.rail { display: flex; flex-direction: column; justify-content: space-between; width: 36px; background: #2d2d2d; border-right: 1px solid #000; }
.rail-tabs { display: grid; grid-auto-rows: 1fr; height: 520px; }
.rail .icon { width: 20px; height: 20px; }
.rail-tabs .active { background: #1a537f; border: 3px solid #eec659; }
.markups { height: 35px; background: #1a537f; }

.panel { display: flex; flex-direction: column; width: 577px; background: #2d2d2d; border-right: 1px solid #000; }
.panel-title { display: flex; align-items: center; gap: 14px; margin: 0; padding: 8px 13px 0; font-size: 18px; line-height: 24px; font-weight: 600; }
.measure-tools { display: flex; align-items: center; gap: 17px; padding: 25px 25px 0; height: 54px; }
.measure-tools button { gap: 11px; }
.measure-tools .wide { margin-right: 4px; }
.cutgroup { display: flex; align-items: center; gap: 12px; margin-left: -4px; }
.bar { width: 2px; height: 25px; background: #777; }
.panel-scroll { display: flex; flex: 1; min-height: 0; margin-top: 19px; }
.panel-content { flex: 1; min-width: 0; overflow: hidden; padding: 10px 7px 0 13px; }
h2 { display: flex; align-items: center; gap: 16px; margin: 0; padding-left: 4px; font-size: 15px; line-height: 20px; font-weight: 400; }
.form { display: grid; grid-template-columns: 65px 1fr; column-gap: 13px; row-gap: 7px; padding-top: 17px; align-items: center; }
.lbl { text-align: right; grid-column: 1; }
.row { display: flex; align-items: center; grid-column: 2; }
.between { justify-content: space-between; }
.btn, .add-scale { background: #353535; }
.add-scale { gap: 4px; width: 213px; }
.btn { width: 112px; }
.radios { gap: 20px; height: 26px; }
.radios label, .check { display: flex; align-items: center; gap: 11px; }
input[type=radio], input[type=checkbox] { appearance: none; width: 18px; height: 18px; border: 1px solid #858585; border-radius: 3px; background: #292929; }
input[type=radio] { border-radius: 50%; }
input[type=radio]:checked { background: radial-gradient(#fff 4px, #292929 5px); }
.check { height: 27px; }
.values { gap: 13px; }
.w-num { width: 74px; }
.w-in { width: 56px; }
.eq { width: 7px; }
.w-ft { width: 80px; }
.w-prec { width: 112px; }
.h-volume { padding-top: 17px; }
.props { display: flex; flex-direction: column; gap: 7px; padding-top: 17px; }
.prop { display: flex; align-items: center; gap: 13px; }
.prop label { width: 65px; text-align: right; }
.prop input, .prop select { flex: 1; }
.prop select.w-depth { flex: none; width: 76px; }
.off { color: #7b7b7b; }
.marked { margin: 1px 0 1px 16px; outline: 3px solid #eec659; }
.marked label { width: 49px; }
.focus { background: #23323d; border-color: #2f6d9c; }
.prop-buttons { display: flex; gap: 13px; padding-left: 78px; }
.split { width: 64px; gap: 5px; }
.divider { width: 1px; height: 29px; background: #757575; }
.h-view { padding-top: 20px; }
.viewports { height: 300px; margin-top: 12px; border: 1px solid #757575; border-top-width: 2px; border-radius: 4px; }
.scrollbar { display: flex; flex-direction: column; width: 20px; margin-right: 10px; background: #3a3a3a; }
.scrollbar button { height: 21px; }
.scrollbar .last { height: 32px; }
.track { flex: 1; }
.thumb { display: block; height: 88%; background: #888; }

.doc { display: flex; flex-direction: column; flex: 1; min-width: 0; border-left: 1px solid #000; background: #2d2d2d; }
.tabs { display: flex; justify-content: space-between; height: 34px; }
.tab { display: flex; align-items: center; justify-content: space-between; width: 197px; padding: 0 6px 0 9px; background: #484848; }
.tab .icon { width: 20px; height: 20px; }
.tab-list { width: 42px; }
.canvas { display: flex; flex: 1; min-height: 0; background: #fdfdfd; }
.plan { flex: 1; min-width: 0; height: 100%; stroke: none; fill: #111; overflow: hidden; }
.vscroll { width: 21px; background: #efefef; padding: 184px 0 0 8px; }
.vscroll i { display: block; width: 3px; height: 330px; background: #777; }
.status { display: flex; align-items: center; height: 35px; }
.status button { width: 36px; height: 35px; }
.status .faint { color: #656565; }
.status .active { background: #1a537f; }
.sep { width: 1px; height: 22px; margin: 0 2px; background: #666; }
.nav-tools { display: flex; align-items: center; margin-left: 39px; }
.page-box { width: 303px; height: 25px; padding: 0; border: 1px solid #606060; border-radius: 2px; background: #2d2d2d; text-align: center; }
.readout { display: flex; align-items: center; gap: 17px; margin-left: auto; padding-right: 12px; font-size: 17px; white-space: nowrap; }
.readout span + span { padding-left: 7px; }

.tools { width: 44px; background: #2d2d2d; padding-top: 5px; }
.dots-row { display: block; width: 34px; height: 2px; margin-left: 4px; background: repeating-linear-gradient(90deg, #888 0 2px, #2d2d2d 2px 4px); }
.short { width: 26px; }
.group { display: grid; grid-auto-rows: 1fr; }
.one { height: 322px; margin: 4px 0; padding-right: 2px; }
.two { height: 429px; margin-top: 4px; padding-right: 10px; }
.tools .icon { width: 20px; height: 20px; }
.tools .micon { width: 23px; height: 24px; }
.bottom-edge { height: 4px; border-top: 2px solid #000; background: #1c2126; }

.paper { fill: #fdfdfd; }
.thin { fill: none; stroke: #333; stroke-width: 1; }
.thin .leaf { stroke: #111; stroke-width: 2; }
.thin .tread { stroke: #111; stroke-width: 2; stroke-dasharray: 5 3; }
.thin .axis { stroke: #555; stroke-dasharray: 35 10 8 9; }
.line { fill: none; stroke: #222; stroke-width: 1.5; }
.dash { fill: none; stroke: #333; stroke-width: 1.2; stroke-dasharray: 4 2; }
.facade { stroke: #111; stroke-width: 3; }
.mullion { stroke: #000; stroke-width: 5; stroke-dasharray: 3 41; }
.hatch-line { fill: none; stroke: #222; stroke-width: 1.3; }
.w-out { fill: none; stroke: #1a1a1a; stroke-width: 5; }
.w-in-line { fill: none; stroke: #fdfdfd; stroke-width: 2.6; }
.braced { fill: none; stroke: #111; stroke-width: 4; stroke-dasharray: 6 1; }
.core { fill: none; stroke: #000; stroke-width: 5; }
.core-gap { fill: none; stroke: #fff; stroke-width: 2; stroke-dasharray: 4 13; stroke-dashoffset: -7; }
.wc { fill: #fff; stroke: #222; stroke-width: 1.6; }
.boundary { fill: none; stroke: #000; stroke-width: 3; stroke-dasharray: 14 7; }
.beams { fill: none; stroke: #111; stroke-width: 1.6; }
.bubbles { fill: #fdfdfd; stroke: #333; stroke-width: 1; }
.tag { font-size: 9px; text-anchor: middle; fill: #333; }
.strong { font-weight: 700; }
.dimension { font-size: 9px; text-anchor: middle; fill: #222; }
.dimension .ref { font-size: 10px; }
.faded { fill: #999; }
.room { font-size: 11px; font-weight: 600; text-anchor: middle; fill: #111; }
.room .lg { font-size: 12px; }
.room .sm { font-size: 10px; }
.room .light { font-weight: 400; }
.end { text-anchor: end; }
.lobby { fill: none; }
.lobby-fill { fill: #467f94; }
.lobby-wall { stroke: #111; stroke-width: 4; }
.lobby-ticks { stroke: #e9dfa4; stroke-width: 2; stroke-dasharray: 4 14; }
.lobby-edge { stroke: #e0cf52; stroke-width: 2; }
.lobby-line { stroke: #1d4c5e; stroke-width: 1.4; }
.vol { fill: #235d6e; }
.vol-edge { fill: none; stroke: #e3cb5d; stroke-width: 4; }
.vol-dash { fill: none; stroke: #3b3410; stroke-width: 1.5; stroke-dasharray: 6 3; }
.ghost { fill: none; stroke: #174a59; stroke-width: 1; }
.bbox { fill: none; stroke: #4aa3cf; stroke-width: 1; stroke-dasharray: 3 3; }
.grip { fill: #2c7bb5; stroke: #174b7c; stroke-width: 1; }
.node { fill: #a89a1c; stroke: #5f5a12; stroke-width: 1; }
.area-text, .vol-text { font-family: "Liberation Sans", sans-serif; font-weight: 700; text-anchor: middle; }
.area-text { font-size: 19px; fill: #6f7d54; }
.vol-text { font-size: 21px; fill: #f5dc5c; }
.cursor { fill: #0b1a26; stroke: #dce8ec; stroke-width: 1; }
.watermark { fill: #8e8e8e; fill-opacity: .8; font-family: "Open Sans", sans-serif; }
.wm-big { font-size: 24px; }
.wm-small { font-size: 17px; }
```
